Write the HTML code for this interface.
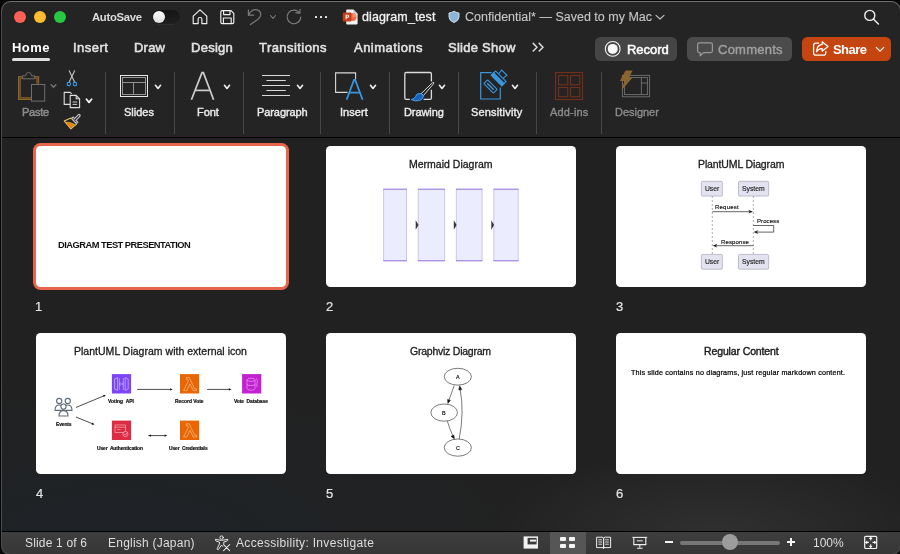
<!DOCTYPE html>
<html><head><meta charset="utf-8"><title>diagram_test</title>
<style>
*{box-sizing:border-box;margin:0;padding:0}
html,body{width:900px;height:554px;overflow:hidden;background:#000;font-family:"Liberation Sans",sans-serif;}
.abs{position:absolute}
.t{position:absolute;white-space:pre;will-change:transform}
#chrome{position:absolute;left:0;top:0;width:900px;height:137px;background:#242424}
#hline{position:absolute;left:0;top:137px;width:900px;height:1px;background:#000}
#sorter{position:absolute;left:0;top:138px;width:900px;height:393px;background:radial-gradient(ellipse 230px 90px at 715px 400px,rgba(255,255,255,0.07),rgba(255,255,255,0) 100%),radial-gradient(ellipse 420px 160px at 120px 400px,rgba(20,40,60,0.22),rgba(20,40,60,0) 100%),#212121}
#sline{position:absolute;left:0;top:531px;width:900px;height:1px;background:#000}
#status{position:absolute;left:0;top:532px;width:900px;height:22px;background:linear-gradient(#3e3e3e,#363636)}
.slide{position:absolute;width:250px;height:140.5px;background:#fff;border-radius:4.5px;overflow:hidden}
.sep{position:absolute;top:72px;width:1px;height:62px;background:#474747}
</style></head><body>
<div id="chrome"></div>
<div id="hline"></div>
<div id="sorter"></div>
<div id="sline"></div>
<div id="status"></div>
<!--TITLEBAR-->
<div class="abs" style="left:14px;top:11px;width:12px;height:12px;border-radius:50%;background:#fe5f57;"></div>
<div class="abs" style="left:34px;top:11px;width:12px;height:12px;border-radius:50%;background:#febc2e;"></div>
<div class="abs" style="left:54px;top:11px;width:12px;height:12px;border-radius:50%;background:#28c840;"></div>
<div class="t" style="left:92.20px;top:9px;font-size:11.3px;line-height:16px;color:#dcdcdc;letter-spacing:-0.301px;font-weight:bold;">AutoSave</div>
<div class="abs" style="left:152px;top:10px;width:28px;height:14px;border-radius:7px;background:linear-gradient(#151515,#1f1f1f);box-shadow:0 0.6px 0 #3a3a3a"></div>
<div class="abs" style="left:153px;top:11px;width:12px;height:12px;border-radius:50%;background:linear-gradient(#ffffff,#dedede);"></div>
<svg class="abs" style="left:190px;top:7px" width="20" height="20" viewBox="0 0 20 20" fill="none" stroke="#f0f0f0" stroke-width="1.15" stroke-linejoin="round" stroke-linecap="round">
<path d="M3.2 9.2 L10 2.8 L16.8 9.2 V16.6 H11.9 V12.2 Q11.9 10.5 10 10.5 Q8.1 10.5 8.1 12.2 V16.6 H3.2 Z"/>
</svg>
<svg class="abs" style="left:218px;top:7px" width="20" height="20" viewBox="0 0 20 20" fill="none" stroke="#f0f0f0" stroke-width="1.15" stroke-linejoin="round">
<path d="M2.8 5 Q2.8 3.6 4.2 3.6 H13 L15.8 6.4 V15.2 Q15.8 16.6 14.4 16.6 H4.2 Q2.8 16.6 2.8 15.2 Z"/>
<path d="M5.6 3.8 V7.6 H12 V3.8"/>
<path d="M5.4 16.4 V11 H13.2 V16.4"/>
</svg>
<svg class="abs" style="left:244px;top:5px" width="22" height="24" viewBox="0 0 22 24" fill="none" stroke="#7b7b7b" stroke-width="1.2" stroke-linecap="round" stroke-linejoin="round">
<path d="M4.4 5 V10.2 H9.6"/>
<path d="M4.6 10 Q7.5 4 13 4.8 Q17.4 6 16.6 10.4 Q16 12.8 13.6 14.6 L6.4 19.6"/>
</svg>
<svg class="abs" style="left:268px;top:12px" width="10" height="10" viewBox="0 0 10 10" fill="none" stroke="#7b7b7b" stroke-width="1.1" stroke-linecap="round" stroke-linejoin="round"><path d="M2.4 3.5 L5 6.4 L7.6 3.5"/></svg>
<svg class="abs" style="left:283px;top:5px" width="22" height="24" viewBox="0 0 22 24" fill="none" stroke="#7b7b7b" stroke-width="1.2" stroke-linecap="round" stroke-linejoin="round">
<path d="M16.6 8.2 A6.8 6.8 0 1 0 17.7 12.2"/>
<path d="M12.8 7.8 H17 V4.4"/>
</svg>
<div class="abs" style="left:315px;top:16px;width:2px;height:2px;background:#f0f0f0;box-shadow:5px 0 0 #f0f0f0,10px 0 0 #f0f0f0;border-radius:0.5px"></div>
<svg class="abs" style="left:342px;top:9px" width="17" height="16" viewBox="0 0 17 16">
<path d="M5 0.6 H11.4 L15.6 4.8 V14.6 Q15.6 15.4 14.8 15.4 H5 Q4.2 15.4 4.2 14.6 V1.4 Q4.2 0.6 5 0.6 Z" fill="#f3f3f3"/>
<path d="M11.4 0.6 L15.6 4.8 H12.2 Q11.4 4.8 11.4 4 Z" fill="#c9c9c9"/>
<circle cx="10.6" cy="8" r="3.9" fill="#ed6c47"/>
<path d="M10.6 4.1 A3.9 3.9 0 0 1 14.5 8 H10.6 Z" fill="#ff8f6b"/>
<rect x="0.8" y="3.6" width="8.6" height="8.8" rx="1" fill="#c43e1c"/>
<path d="M3.6 10.3 V5.7 H5.6 Q7.2 5.7 7.2 7.2 Q7.2 8.7 5.6 8.7 H4.6 V10.3 Z M4.6 6.6 V7.8 H5.5 Q6.2 7.8 6.2 7.2 Q6.2 6.6 5.5 6.6 Z" fill="#fff" fill-rule="evenodd"/>
</svg>
<div class="t" style="left:362.30px;top:8px;font-size:12.5px;line-height:18px;color:#f2f2f2;letter-spacing:0.103px;-webkit-text-stroke:0.3px #f2f2f2;">diagram_test</div>
<svg class="abs" style="left:447px;top:9px" width="14" height="16" viewBox="0 0 14 16">
<path d="M7 2.2 Q9.4 3.8 12 4 V8 Q11.8 11.8 7 13.6 Q2.2 11.8 2 8 V4 Q4.6 3.8 7 2.2 Z" fill="#8db4d8" stroke="#d9e8f5" stroke-width="0.9"/>
</svg>
<div class="t" style="left:465.00px;top:8px;font-size:12.5px;line-height:18px;color:#c8c8c8;letter-spacing:0.004px;-webkit-text-stroke:0.1px #c8c8c8;">Confidential* — Saved to my Mac</div>
<svg class="abs" style="left:654px;top:12px" width="12" height="10" viewBox="0 0 12 10" fill="none" stroke="#bdbdbd" stroke-width="1.2" stroke-linecap="round" stroke-linejoin="round"><path d="M2 3.4 L6 7 L10 3.4"/></svg>
<svg class="abs" style="left:862px;top:7px" width="20" height="20" viewBox="0 0 20 20" fill="none" stroke="#f0f0f0" stroke-width="1.4" stroke-linecap="round"><circle cx="7.8" cy="8.4" r="5"/><path d="M11.6 12.2 L16.4 17"/></svg>

<!--TABS-->
<div class="t" style="left:12.40px;top:38px;font-size:13px;line-height:19px;color:#ffffff;letter-spacing:0.419px;font-weight:bold;">Home</div>
<div class="abs" style="left:12px;top:58px;width:38px;height:3px;border-radius:1.5px;background:#dedede"></div>
<div class="t" style="left:73.40px;top:38px;font-size:13px;line-height:19px;color:#e2e2e2;letter-spacing:0.481px;-webkit-text-stroke:0.55px #e2e2e2;">Insert</div>
<div class="t" style="left:134.40px;top:38px;font-size:13px;line-height:19px;color:#e2e2e2;letter-spacing:0.214px;-webkit-text-stroke:0.55px #e2e2e2;">Draw</div>
<div class="t" style="left:190.50px;top:38px;font-size:13px;line-height:19px;color:#e2e2e2;letter-spacing:0.255px;-webkit-text-stroke:0.55px #e2e2e2;">Design</div>
<div class="t" style="left:258.50px;top:38px;font-size:13px;line-height:19px;color:#e2e2e2;letter-spacing:0.445px;-webkit-text-stroke:0.55px #e2e2e2;">Transitions</div>
<div class="t" style="left:353.50px;top:38px;font-size:13px;line-height:19px;color:#e2e2e2;letter-spacing:0.469px;-webkit-text-stroke:0.55px #e2e2e2;">Animations</div>
<div class="t" style="left:448.40px;top:38px;font-size:13px;line-height:19px;color:#e2e2e2;letter-spacing:0.255px;-webkit-text-stroke:0.55px #e2e2e2;">Slide Show</div>
<svg class="abs" style="left:530px;top:41px" width="16" height="12" viewBox="0 0 16 12" fill="none" stroke="#dcdcdc" stroke-width="1.5" stroke-linecap="round" stroke-linejoin="round"><path d="M3.2 2.4 L7 6.2 L3.2 10"/><path d="M9.2 2.4 L13 6.2 L9.2 10"/></svg>
<div class="abs" style="left:595px;top:37px;width:82px;height:23.5px;border-radius:5.5px;background:#454545"></div>
<svg class="abs" style="left:603px;top:39px" width="20" height="20" viewBox="0 0 20 20"><circle cx="9.7" cy="9.9" r="7.4" fill="none" stroke="#f4f4f4" stroke-width="1.1"/><circle cx="9.7" cy="9.9" r="5" fill="#f8f8f8"/></svg>
<div class="t" style="left:626.80px;top:40px;font-size:13px;line-height:19px;color:#ffffff;letter-spacing:-0.054px;-webkit-text-stroke:0.5px #ffffff;">Record</div>
<div class="abs" style="left:687.4px;top:37px;width:104.6px;height:23.5px;border-radius:5.5px;background:#4b4b4b"></div>
<svg class="abs" style="left:695px;top:40px" width="20" height="18" viewBox="0 0 20 18" fill="none" stroke="#9a9a9a" stroke-width="1.2" stroke-linejoin="round"><path d="M4.4 2.8 H15.6 Q17.4 2.8 17.4 4.6 V10.8 Q17.4 12.6 15.6 12.6 H8.6 L5.2 15.8 V12.6 H4.4 Q2.6 12.6 2.6 10.8 V4.6 Q2.6 2.8 4.4 2.8 Z"/></svg>
<div class="t" style="left:718.40px;top:40px;font-size:13px;line-height:19px;color:#9f9f9f;letter-spacing:0.243px;-webkit-text-stroke:0.45px #9f9f9f;">Comments</div>
<div class="abs" style="left:802px;top:37px;width:89px;height:23.5px;border-radius:5.5px;background:#c4450f"></div>
<svg class="abs" style="left:811px;top:39px" width="20" height="20" viewBox="0 0 20 20" fill="none" stroke="#ffffff" stroke-width="1.25" stroke-linejoin="round" stroke-linecap="round">
<path d="M7.6 4.2 H4.8 Q2.6 4.2 2.6 6.4 V14 Q2.6 16.2 4.8 16.2 H12.6 Q14.8 16.2 14.8 14 V12.6"/>
<path d="M11.2 2.8 L17 7.6 L11.2 12.2 V9.6 Q7.4 9.4 5.6 12.8 Q5.8 6 11.2 5.4 Z"/>
</svg>
<div class="t" style="left:833.40px;top:40px;font-size:13px;line-height:19px;color:#ffffff;letter-spacing:-0.548px;font-weight:bold;">Share</div>
<svg class="abs" style="left:874px;top:44px" width="12" height="10" viewBox="0 0 12 10" fill="none" stroke="#fff" stroke-width="1.2" stroke-linecap="round" stroke-linejoin="round"><path d="M2.2 3.4 L6 7.2 L9.8 3.4"/></svg>

<!--RIBBON-->
<div class="sep" style="left:105px"></div>
<div class="sep" style="left:174px"></div>
<div class="sep" style="left:243px"></div>
<div class="sep" style="left:320px"></div>
<div class="sep" style="left:389px"></div>
<div class="sep" style="left:458px"></div>
<div class="sep" style="left:536px"></div>
<div class="sep" style="left:601px"></div>
<svg class="abs" style="left:14px;top:68px" width="36" height="36" viewBox="0 0 36 36" fill="none">
<path d="M17.4 30.6 H5.4 V9.6 H23.8 V15.6" stroke="#94713c" stroke-width="2.7" stroke-linejoin="miter"/>
<path d="M17.4 30.4 H5.7 V9.9 H23.5 V15.6" stroke="#6e491b" stroke-width="1.7" stroke-linejoin="miter"/>
<path d="M8.6 10.8 V7.8 H11.6 Q11.8 4.4 14.6 4.4 Q17.4 4.4 17.6 7.8 H20.6 V10.8 Z" stroke="#6e6e6e" stroke-width="1" fill="#242424" stroke-linejoin="round"/>
<rect x="17.5" y="16.5" width="13.2" height="16.6" stroke="#6e6e6e" stroke-width="1" fill="#242424"/>
</svg>
<svg class="abs" style="left:48.6px;top:81.9px" width="10" height="8" viewBox="0 0 10 8" fill="none" stroke="#707070" stroke-width="1.6" stroke-linecap="round" stroke-linejoin="round"><path d="M2.2 2.8 L4.5 5.3 L6.8 2.8"/></svg>
<div class="t" style="left:21.70px;top:104px;font-size:11px;line-height:16px;color:#8c8c8c;letter-spacing:-0.248px;-webkit-text-stroke:0.5px #8c8c8c;">Paste</div>
<svg class="abs" style="left:62px;top:68px" width="20" height="20" viewBox="0 0 20 20" fill="none" stroke-linecap="round">
<path d="M7.2 2.8 L12.8 14.4" stroke="#c2c2c2" stroke-width="1.1"/>
<path d="M12.6 2.8 L7 14.4" stroke="#c2c2c2" stroke-width="1.1"/>
<rect x="5.2" y="14.4" width="3.2" height="3.2" rx="1" stroke="#3a96dd" stroke-width="1.1"/>
<rect x="11.4" y="14.4" width="3.2" height="3.2" rx="1" stroke="#3a96dd" stroke-width="1.1"/>
</svg>
<svg class="abs" style="left:62px;top:90px" width="20" height="20" viewBox="0 0 20 20" fill="none" stroke="#dedede" stroke-width="1.1" stroke-linejoin="round">
<path d="M8 14.4 H2.2 V2.4 H8.2 L9.6 3.8"/>
<path d="M8.2 5.4 H14.2 L17.6 8.8 V17.6 H8.2 Z" fill="#242424"/>
<path d="M14.2 5.4 V8.8 H17.6"/>
<path d="M10.6 12 H15.2 M10.6 14.4 H15.2" stroke-width="0.9"/>
</svg>
<svg class="abs" style="left:84.05px;top:96.95px" width="10" height="8" viewBox="0 0 10 8" fill="none" stroke="#f4f4f4" stroke-width="1.8" stroke-linecap="round" stroke-linejoin="round"><path d="M2.45 2.3 L5 5.4 L7.55 2.3"/></svg>
<svg class="abs" style="left:58px;top:108px" width="30" height="26" viewBox="0 0 30 26" fill="none" stroke-linejoin="round" stroke-linecap="round">
<path d="M12.9 10 L6.2 12.9 L12.9 20.8 L18.4 16.2" stroke="#f3c25c" stroke-width="1.1"/>
<path d="M8.4 14.2 Q12 14 16.6 16.4 L12.9 19.8 Z" fill="#e8870f" stroke="#eea32e" stroke-width="0.8"/>
<path d="M17.6 11.2 L21 7.6" stroke="#c6c6c6" stroke-width="3.4"/>
<path d="M13.9 9.3 L19.5 15.3" stroke="#c6c6c6" stroke-width="3.2" stroke-linecap="butt"/>
<path d="M14.6 10 L18.8 14.6" stroke="#242424" stroke-width="1" stroke-linecap="butt"/>
<path d="M17.4 11.4 L21 7.6" stroke="#242424" stroke-width="1.2"/>
</svg>
<svg class="abs" style="left:118px;top:72px" width="32" height="28" viewBox="0 0 32 28" fill="none">
<rect x="2.5" y="3.5" width="27" height="21" stroke="#e8e8e8" stroke-width="1"/>
<rect x="4.5" y="5.5" width="23" height="17" stroke="#929292" stroke-width="1"/>
<path d="M4.5 10.5 H27.5 M15.5 10.5 V22.5" stroke="#929292" stroke-width="1"/>
</svg>
<svg class="abs" style="left:153.05px;top:82.75px" width="10" height="8" viewBox="0 0 10 8" fill="none" stroke="#f2f2f2" stroke-width="1.6" stroke-linecap="round" stroke-linejoin="round"><path d="M2.45 2.3 L5 5.4 L7.55 2.3"/></svg>
<div class="t" style="left:124.30px;top:104px;font-size:11px;line-height:16px;color:#ececec;letter-spacing:0.005px;-webkit-text-stroke:0.4px #ececec;">Slides</div>
<svg class="abs" style="left:188px;top:70px" width="30" height="32" viewBox="0 0 30 32" fill="none" stroke="#cecece" stroke-width="1.7" stroke-linejoin="miter">
<path d="M3.4 29.8 L14 2.6 H15.4 L25.6 29.8"/>
<path d="M7.4 20.4 H21.8"/>
</svg>
<svg class="abs" style="left:221.85px;top:82.75px" width="10" height="8" viewBox="0 0 10 8" fill="none" stroke="#f2f2f2" stroke-width="1.6" stroke-linecap="round" stroke-linejoin="round"><path d="M2.45 2.3 L5 5.4 L7.55 2.3"/></svg>
<div class="t" style="left:197.40px;top:104px;font-size:11px;line-height:16px;color:#ececec;letter-spacing:-0.029px;-webkit-text-stroke:0.4px #ececec;">Font</div>
<svg class="abs" style="left:260px;top:72px" width="32" height="28" viewBox="0 0 32 28" fill="none" stroke="#dadada" stroke-width="1">
<path d="M2 3.5 H30 M6.4 8.5 H25.8 M2 13.5 H30 M6.4 18.5 H25.8 M2 23.5 H30"/>
</svg>
<svg class="abs" style="left:295.05px;top:83.05px" width="10" height="8" viewBox="0 0 10 8" fill="none" stroke="#f2f2f2" stroke-width="1.6" stroke-linecap="round" stroke-linejoin="round"><path d="M2.45 2.3 L5 5.4 L7.55 2.3"/></svg>
<div class="t" style="left:256.60px;top:104px;font-size:11px;line-height:16px;color:#ececec;letter-spacing:-0.086px;-webkit-text-stroke:0.4px #ececec;">Paragraph</div>
<svg class="abs" style="left:333px;top:70px" width="32" height="32" viewBox="0 0 32 32" fill="none">
<path d="M14.6 22.4 H2.6 V2.9 H22.6 V9.4" stroke="#d8d8d8" stroke-width="1.1"/>
<path d="M13.6 29.8 L21 10 H22.2 L29.6 29.8 M16.6 22.6 H26.8" stroke="#3a96dd" stroke-width="1.8"/>
</svg>
<svg class="abs" style="left:368.15px;top:82.75px" width="10" height="8" viewBox="0 0 10 8" fill="none" stroke="#f2f2f2" stroke-width="1.6" stroke-linecap="round" stroke-linejoin="round"><path d="M2.45 2.3 L5 5.4 L7.55 2.3"/></svg>
<div class="t" style="left:340.20px;top:104px;font-size:11px;line-height:16px;color:#ececec;letter-spacing:0.064px;-webkit-text-stroke:0.4px #ececec;">Insert</div>
<svg class="abs" style="left:402px;top:68px" width="36" height="36" viewBox="0 0 36 36" fill="none">
<path d="M7.8 31.3 H4.2 Q2.8 31.3 2.8 29.9 V5.9 Q2.8 4.5 4.2 4.5 H28 Q29.4 4.5 29.4 5.9 V13.4 M29.4 21.8 V29.9 Q29.4 31.3 28 31.3 H21.6" stroke="#dcdcdc" stroke-width="1.3"/>
<path d="M30.6 14.6 Q32.6 13.6 31.4 16 L21.4 27.6 L19.2 25.6 Z" stroke="#d4d4d4" stroke-width="1" fill="#242424" stroke-linejoin="round"/>
<path d="M19 25.4 L21.4 27.8 Q21.4 31.2 17.4 32.6 Q13 33.6 9.2 31.6 Q12.8 31 13.4 28.6 Q14.2 25 19 25.4 Z" fill="#1463bc" stroke="#4ea3ef" stroke-width="0.9"/>
</svg>
<svg class="abs" style="left:436.85px;top:82.75px" width="10" height="8" viewBox="0 0 10 8" fill="none" stroke="#f2f2f2" stroke-width="1.6" stroke-linecap="round" stroke-linejoin="round"><path d="M2.45 2.3 L5 5.4 L7.55 2.3"/></svg>
<div class="t" style="left:403.60px;top:104px;font-size:11px;line-height:16px;color:#ececec;letter-spacing:-0.094px;-webkit-text-stroke:0.4px #ececec;">Drawing</div>
<svg class="abs" style="left:478px;top:68px" width="32" height="34" viewBox="0 0 32 34" fill="none" stroke="#3a96dd" stroke-width="1.2" stroke-linejoin="miter">
<path d="M13.6 4.7 H2.7 V31 H22.3 V19.4"/>
<g transform="translate(20.7,10.3) rotate(45)">
<path d="M-3.1 -3 L-3.7 -8 H3.7 L3.1 -3" stroke-width="1.1"/>
<rect x="-7.4" y="-3" width="14.8" height="6" fill="#242424" stroke-width="1.1"/>
<rect x="-7.4" y="-0.2" width="14.8" height="3.2" fill="#3a96dd"/>
<rect x="-6.8" y="8.9" width="13.6" height="5.4" rx="0.8" fill="#242424" stroke-width="1.1"/>
<rect x="-4.6" y="10.9" width="9.2" height="1.5" fill="#3a96dd" stroke="none"/>
</g>
</svg>
<svg class="abs" style="left:509.95px;top:82.75px" width="10" height="8" viewBox="0 0 10 8" fill="none" stroke="#f2f2f2" stroke-width="1.6" stroke-linecap="round" stroke-linejoin="round"><path d="M2.45 2.3 L5 5.4 L7.55 2.3"/></svg>
<div class="t" style="left:471.20px;top:104px;font-size:11px;line-height:16px;color:#ececec;letter-spacing:0.170px;-webkit-text-stroke:0.4px #ececec;">Sensitivity</div>
<svg class="abs" style="left:553px;top:70px" width="32" height="32" viewBox="0 0 32 32" fill="none" stroke="#7c3118" stroke-width="1">
<rect x="2.6" y="2.6" width="27" height="27"/>
<rect x="5.6" y="5.6" width="9.2" height="9.2"/><rect x="17.6" y="5.6" width="9.2" height="9.2"/>
<rect x="5.6" y="17.6" width="9.2" height="9.2"/><rect x="17.6" y="17.6" width="9.2" height="9.2"/>
</svg>
<div class="t" style="left:549.50px;top:104px;font-size:11px;line-height:16px;color:#8c8c8c;letter-spacing:0.172px;-webkit-text-stroke:0.35px #8c8c8c;">Add-ins</div>
<svg class="abs" style="left:616px;top:68px" width="36" height="32" viewBox="0 0 36 32" fill="none">
<rect x="6.4" y="7.4" width="27.2" height="21.4" stroke="#727272" stroke-width="0.9"/>
<rect x="8.6" y="9.6" width="22.8" height="17" stroke="#727272" stroke-width="0.9"/>
<path d="M25.4 9.6 V26.6 M25.4 15 H31.4" stroke="#727272" stroke-width="0.9"/>
<path d="M9.6 2.4 H16.6 L13 9.8 H16.4 L5.6 22.2 L8.4 13 H3.8 Z" fill="#8c6430"/>
</svg>
<div class="t" style="left:614.60px;top:104px;font-size:11px;line-height:16px;color:#8c8c8c;letter-spacing:-0.029px;-webkit-text-stroke:0.35px #8c8c8c;">Designer</div>

<!--SLIDES-->
<div class="abs" style="left:33px;top:143px;width:256px;height:147px;border-radius:7.5px;background:#e8644b"></div>
<div class="slide" style="left:36px;top:146.2px"></div>
<div class="slide" style="left:326px;top:146.2px"></div>
<div class="slide" style="left:616px;top:146.2px"></div>
<div class="slide" style="left:36px;top:333.2px"></div>
<div class="slide" style="left:326px;top:333.2px"></div>
<div class="slide" style="left:616px;top:333.2px"></div>
<div class="t" style="left:35.20px;top:297px;font-size:13px;line-height:19px;color:#e4e4e4;letter-spacing:-0.800px;-webkit-text-stroke:0.2px #e4e4e4;">1</div>
<div class="t" style="left:326.20px;top:297px;font-size:13px;line-height:19px;color:#e4e4e4;letter-spacing:-0.800px;-webkit-text-stroke:0.2px #e4e4e4;">2</div>
<div class="t" style="left:616.20px;top:297px;font-size:13px;line-height:19px;color:#e4e4e4;letter-spacing:-0.800px;-webkit-text-stroke:0.2px #e4e4e4;">3</div>
<div class="t" style="left:36.00px;top:484px;font-size:13px;line-height:19px;color:#e4e4e4;letter-spacing:-0.800px;-webkit-text-stroke:0.2px #e4e4e4;">4</div>
<div class="t" style="left:326.20px;top:484px;font-size:13px;line-height:19px;color:#e4e4e4;letter-spacing:-0.800px;-webkit-text-stroke:0.2px #e4e4e4;">5</div>
<div class="t" style="left:616.20px;top:484px;font-size:13px;line-height:19px;color:#e4e4e4;letter-spacing:-0.800px;-webkit-text-stroke:0.2px #e4e4e4;">6</div>
<div class="t" style="left:58.30px;top:238px;font-size:9.3px;line-height:14px;color:#111;letter-spacing:-0.500px;font-weight:bold;">DIAGRAM TEST PRESENTATION</div>
<div class="t" style="left:408.90px;top:156px;font-size:10.5px;line-height:16px;color:#1a1a1a;letter-spacing:0.004px;-webkit-text-stroke:0.3px #1a1a1a;">Mermaid Diagram</div>
<div class="t" style="left:697.60px;top:156px;font-size:10.5px;line-height:16px;color:#1a1a1a;letter-spacing:-0.126px;-webkit-text-stroke:0.3px #1a1a1a;">PlantUML Diagram</div>
<div class="t" style="left:74.30px;top:343px;font-size:10.5px;line-height:16px;color:#1a1a1a;letter-spacing:0.018px;-webkit-text-stroke:0.3px #1a1a1a;">PlantUML Diagram with external icon</div>
<div class="t" style="left:410.30px;top:343px;font-size:10.5px;line-height:16px;color:#1a1a1a;letter-spacing:-0.239px;-webkit-text-stroke:0.3px #1a1a1a;">Graphviz Diagram</div>
<div class="t" style="left:703.60px;top:343px;font-size:10.5px;line-height:16px;color:#1a1a1a;letter-spacing:-0.125px;-webkit-text-stroke:0.4px #1a1a1a;">Regular Content</div>
<div class="t" style="left:631.20px;top:366px;font-size:7.2px;line-height:13px;color:#000;letter-spacing:0.179px;-webkit-text-stroke:0.22px #000;">This slide contains no diagrams, just regular markdown content.</div>
<svg class="abs" style="left:326px;top:146px" width="250" height="141" viewBox="326 146 250 141">
<rect x="383.3" y="188.8" width="23.5" height="72.4" fill="#ececff"/>
<path d="M383.6 189 V261 M406.5 189 V261" stroke="#c4b2ee" stroke-width="0.7"/>
<path d="M383.3 189.2 H406.8 M383.3 260.8 H406.8" stroke="#9370db" stroke-width="1"/>
<rect x="417.9" y="188.8" width="27.0" height="72.4" fill="#ececff"/>
<path d="M418.2 189 V261 M444.6 189 V261" stroke="#c4b2ee" stroke-width="0.7"/>
<path d="M417.9 189.2 H444.9 M417.9 260.8 H444.9" stroke="#9370db" stroke-width="1"/>
<rect x="456.0" y="188.8" width="26.4" height="72.4" fill="#ececff"/>
<path d="M456.3 189 V261 M482.1 189 V261" stroke="#c4b2ee" stroke-width="0.7"/>
<path d="M456.0 189.2 H482.4 M456.0 260.8 H482.4" stroke="#9370db" stroke-width="1"/>
<rect x="493.5" y="188.8" width="25.0" height="72.4" fill="#ececff"/>
<path d="M493.8 189 V261 M518.2 189 V261" stroke="#c4b2ee" stroke-width="0.7"/>
<path d="M493.5 189.2 H518.5 M493.5 260.8 H518.5" stroke="#9370db" stroke-width="1"/>
<path d="M415.7 220.2 L418.5 225 L415.7 229.8 Z" fill="#333"/>
<path d="M453.8 220.2 L456.6 225 L453.8 229.8 Z" fill="#333"/>
<path d="M491.3 220.2 L494.1 225 L491.3 229.8 Z" fill="#333"/>
</svg>
<svg class="abs" style="left:616px;top:146px" width="250" height="141" viewBox="616 146 250 141" fill="none">
<path d="M712.3 196 V255 M753.3 196 V255" stroke="#777" stroke-width="0.6" stroke-dasharray="2 2"/>
<rect x="701.3" y="181.3" width="21.1" height="14.8" rx="1.2" fill="#e2e2f0" stroke="#9a9aae" stroke-width="0.6"/>
<rect x="701.3" y="254.4" width="21.1" height="14.8" rx="1.2" fill="#e2e2f0" stroke="#9a9aae" stroke-width="0.6"/>
<rect x="738.5" y="181.3" width="30.1" height="14.8" rx="1.2" fill="#e2e2f0" stroke="#9a9aae" stroke-width="0.6"/>
<rect x="738.5" y="254.4" width="30.1" height="14.8" rx="1.2" fill="#e2e2f0" stroke="#9a9aae" stroke-width="0.6"/>
<path d="M712.3 211.7 H751" stroke="#222" stroke-width="0.7"/><path d="M753 211.7 L748.4 209.8 L749.6 211.7 L748.4 213.6 Z" fill="#222"/>
<path d="M753.3 225.5 H773.7 V232.1 H755.5" stroke="#222" stroke-width="0.7"/><path d="M753.6 232.1 L758.2 230.2 L757 232.1 L758.2 234 Z" fill="#222"/>
<path d="M753.3 245.7 H714.5" stroke="#222" stroke-width="0.7"/><path d="M712.6 245.7 L717.2 243.8 L716 245.7 L717.2 247.6 Z" fill="#222"/>
</svg>
<div class="t" style="left:704.80px;top:183px;font-size:6.8px;line-height:11px;color:#111;letter-spacing:-0.065px;-webkit-text-stroke:0.1px #111;">User</div>
<div class="t" style="left:741.60px;top:183px;font-size:6.8px;line-height:11px;color:#111;letter-spacing:0.005px;-webkit-text-stroke:0.1px #111;">System</div>
<div class="t" style="left:704.80px;top:256px;font-size:6.8px;line-height:11px;color:#111;letter-spacing:-0.065px;-webkit-text-stroke:0.1px #111;">User</div>
<div class="t" style="left:741.60px;top:256px;font-size:6.8px;line-height:11px;color:#111;letter-spacing:0.005px;-webkit-text-stroke:0.1px #111;">System</div>
<div class="t" style="left:715.40px;top:202px;font-size:6px;line-height:10px;color:#111;letter-spacing:0.220px;-webkit-text-stroke:0.15px #111;">Request</div>
<div class="t" style="left:756.90px;top:216px;font-size:6px;line-height:10px;color:#111;letter-spacing:0.088px;-webkit-text-stroke:0.15px #111;">Process</div>
<div class="t" style="left:720.60px;top:237px;font-size:6px;line-height:10px;color:#111;letter-spacing:0.134px;-webkit-text-stroke:0.15px #111;">Response</div>
<svg class="abs" style="left:36px;top:333px" width="250" height="141" viewBox="36 333 250 141" fill="none">
<rect x="111.9" y="374.1" width="19.2" height="19.4" fill="#7d45fa"/>
<rect x="180.0" y="374.1" width="19.2" height="19.4" fill="#e96604"/>
<rect x="242.1" y="374.1" width="19.2" height="19.4" fill="#c320cf"/>
<rect x="111.9" y="420.6" width="19.2" height="19.4" fill="#dc2b42"/>
<rect x="180.0" y="420.6" width="19.2" height="19.4" fill="#e96604"/>
<g stroke="#e9dcff" stroke-opacity="0.7" stroke-width="0.8" fill="none"><path d="M117.6 377.6 L114.6 379 V389 L117.6 390.4 Z M125.2 377.6 L128.2 379 V389 L125.2 390.4 Z"/><path d="M119.4 378 V390 M123.4 378 V390" stroke-width="0.7"/><path d="M119.6 384 H123.2 M120.4 382.6 L119.4 384 L120.4 385.4 M122.4 382.6 L123.4 384 L122.4 385.4" stroke-width="0.6"/></g>
<path d="M186.2 377.4 h3 l5.4 11.4 h2 v1.8 h-3.4 l-3.2 -6.8 l-3.2 6.8 h-3.2 l4.8 -9.6 l-0.8 -1.8 h-1.4 z" stroke="#ffd9b0" stroke-opacity="0.75" stroke-width="0.7" fill="none"/>
<path d="M186.2 423.8 h3 l5.4 11.4 h2 v1.8 h-3.4 l-3.2 -6.8 l-3.2 6.8 h-3.2 l4.8 -9.6 l-0.8 -1.8 h-1.4 z" stroke="#ffd9b0" stroke-opacity="0.75" stroke-width="0.7" fill="none"/>
<g stroke="#f6d0f8" stroke-opacity="0.7" stroke-width="0.7" fill="none"><ellipse cx="251" cy="379.8" rx="4" ry="1.6"/><path d="M247 379.8 V388.6 Q247 390.2 251 390.2 Q255 390.2 255 388.6 V379.8"/><path d="M247 384 Q247 385.6 251 385.6 Q255 385.6 255 384"/><path d="M256 378 Q258.4 380 257 383 Q256.2 385 257.4 387"/></g>
<g stroke="#ffd3da" stroke-opacity="0.75" stroke-width="0.7" fill="none"><rect x="115" y="425" width="10.6" height="7.6"/><path d="M115 427.2 H125.6 M117 429.6 H120.6"/><circle cx="125.4" cy="434" r="2.6" fill="#dd344c"/><path d="M124.2 434 L125.2 435 L126.8 433"/></g>
<g stroke="#5f6b7a" stroke-width="1.1" fill="#fff"><circle cx="59.2" cy="401" r="2.6"/><path d="M55 410.4 Q55 405 59.2 405 Q63.4 405 63.4 410.4 Z"/><circle cx="67.8" cy="401" r="2.6"/><path d="M63.6 410.4 Q63.6 405 67.8 405 Q72 405 72 410.4 Z"/><circle cx="63.5" cy="406.6" r="2.6"/><path d="M59 416 Q59 410.6 63.5 410.6 Q68 410.6 68 416 Z"/></g>
<path d="M75.90 407.50 L104.46 395.60" stroke="#111" stroke-width="0.75"/><path d="M105.90 395.00 L103.92 397.02 L103.08 394.98 Z" fill="#111"/>
<path d="M75.90 417.00 L93.06 424.01" stroke="#111" stroke-width="0.75"/><path d="M94.50 424.60 L91.68 424.63 L92.51 422.60 Z" fill="#111"/>
<path d="M137.10 389.40 L171.14 389.40" stroke="#111" stroke-width="0.75"/><path d="M172.70 389.40 L170.10 390.50 L170.10 388.30 Z" fill="#111"/>
<path d="M207.10 389.40 L229.94 389.40" stroke="#111" stroke-width="0.75"/><path d="M231.50 389.40 L228.90 390.50 L228.90 388.30 Z" fill="#111"/>
<path d="M148.40 435.60 L165.74 435.60" stroke="#111" stroke-width="0.75"/><path d="M167.30 435.60 L164.70 436.70 L164.70 434.50 Z" fill="#111"/><path d="M148.40 435.60 L151.00 436.70 L151.00 434.50 Z" fill="#111"/>
</svg>
<div class="t" style="left:108.00px;top:397px;font-size:4.9px;line-height:9px;color:#111;letter-spacing:0.041px;font-weight:bold;-webkit-text-stroke:0.2px #111;">Voting  API</div>
<div class="t" style="left:174.90px;top:397px;font-size:4.9px;line-height:9px;color:#111;letter-spacing:0.004px;font-weight:bold;-webkit-text-stroke:0.2px #111;">Record Vote</div>
<div class="t" style="left:233.90px;top:397px;font-size:4.9px;line-height:9px;color:#111;letter-spacing:-0.065px;font-weight:bold;-webkit-text-stroke:0.2px #111;">Vote  Database</div>
<div class="t" style="left:55.60px;top:420px;font-size:4.9px;line-height:9px;color:#111;letter-spacing:-0.108px;font-weight:bold;-webkit-text-stroke:0.2px #111;">Events</div>
<div class="t" style="left:97.00px;top:444px;font-size:4.9px;line-height:9px;color:#111;letter-spacing:-0.088px;font-weight:bold;-webkit-text-stroke:0.2px #111;">User  Authentication</div>
<div class="t" style="left:169.40px;top:444px;font-size:4.9px;line-height:9px;color:#111;letter-spacing:-0.102px;font-weight:bold;-webkit-text-stroke:0.2px #111;">User  Credentials</div>
<svg class="abs" style="left:326px;top:333px" width="250" height="141" viewBox="326 333 250 141" fill="none" stroke="#222" stroke-width="0.6">
<ellipse cx="457.8" cy="376.7" rx="13.6" ry="8.4"/><ellipse cx="444.2" cy="412.6" rx="13.3" ry="8.6"/><ellipse cx="457.8" cy="447.6" rx="13.6" ry="8.6"/>
<path d="M454.2 385.6 L449 400"/><path d="M447.9 403.4 L447.6 399.4 L450.4 400.4 Z" fill="#111"/>
<path d="M447.4 421.2 Q449.6 429 452.8 435.6"/><path d="M454.4 438.8 L451 436.4 L453.8 435 Z" fill="#111"/>
<path d="M459.2 439 Q464.4 412 460.2 389.6"/><path d="M459.6 385.8 L461.8 389.6 L458.8 390 Z" fill="#111"/>
</svg>
<div class="t" style="left:455.90px;top:372px;font-size:5.4px;line-height:10px;color:#000;letter-spacing:-0.106px;-webkit-text-stroke:0.15px #000;font-family:"Liberation Serif",serif;">A</div>
<div class="t" style="left:442.30px;top:408px;font-size:5.4px;line-height:10px;color:#000;letter-spacing:0.191px;-webkit-text-stroke:0.15px #000;font-family:"Liberation Serif",serif;">B</div>
<div class="t" style="left:455.90px;top:443px;font-size:5.4px;line-height:10px;color:#000;letter-spacing:0.191px;-webkit-text-stroke:0.15px #000;font-family:"Liberation Serif",serif;">C</div>

<!--STATUS-->
<div class="t" style="left:25.20px;top:534px;font-size:12px;line-height:18px;color:#dedede;letter-spacing:0.179px;">Slide 1 of 6</div>
<div class="t" style="left:108.20px;top:534px;font-size:12px;line-height:18px;color:#dedede;letter-spacing:0.227px;">English (Japan)</div>
<div class="t" style="left:236.00px;top:534px;font-size:12px;line-height:18px;color:#dedede;letter-spacing:0.313px;">Accessibility: Investigate</div>
<div class="t" style="left:812.60px;top:534px;font-size:12px;line-height:18px;color:#dedede;letter-spacing:-0.026px;">100%</div>
<svg class="abs" style="left:213px;top:534px" width="20" height="18" viewBox="0 0 20 18" fill="none" stroke="#e4e4e4" stroke-width="1" stroke-linejoin="round" stroke-linecap="round">
<circle cx="8.6" cy="3.6" r="1.7"/>
<path d="M2.4 5.6 Q2 6.6 3 7 L6.4 8 V10 L4.2 14.6 Q4 15.8 5.2 15.8 L8.6 11 L9.6 12.4 M14.8 5.6 Q15.2 6.6 14.2 7 L10.8 8 V9.8 M2.6 5.4 L8.6 6.4 L14.6 5.4"/>
<path d="M10.6 10.6 L16.6 16.6 M16.6 10.6 L10.6 16.6" stroke-width="1.1"/>
</svg>
<svg class="abs" style="left:522px;top:535px" width="18" height="15" viewBox="0 0 18 15">
<path d="M1.6 1.4 H16 V13.6 H1.6 Z" fill="#f2f2f2"/>
<rect x="5.6" y="2.9" width="9" height="6.5" fill="#3a3a3a"/>
<rect x="8" y="4.6" width="6" height="2" fill="#f2f2f2"/>
</svg>
<div class="abs" style="left:550px;top:532px;width:36px;height:22px;background:#565656"></div>
<div class="abs" style="left:559.6px;top:537.4px;width:6.2px;height:3.7px;border-radius:1px;background:#f4f4f4"></div>
<div class="abs" style="left:559.6px;top:544.0px;width:6.2px;height:3.7px;border-radius:1px;background:#f4f4f4"></div>
<div class="abs" style="left:568.8px;top:537.4px;width:6.2px;height:3.7px;border-radius:1px;background:#f4f4f4"></div>
<div class="abs" style="left:568.8px;top:544.0px;width:6.2px;height:3.7px;border-radius:1px;background:#f4f4f4"></div>
<svg class="abs" style="left:594px;top:535px" width="20" height="15" viewBox="0 0 20 15" fill="none" stroke="#eeeeee" stroke-width="1">
<path d="M2.6 2.2 H8 Q9.6 2.2 9.6 3.6 V12.6 H2.6 Z M16.6 2.2 H11.2 Q9.6 2.2 9.6 3.6 V12.6 H16.6 Z"/>
<path d="M4.4 4.8 H8 M4.4 7 H8 M4.4 9.2 H8 M11.2 4.8 H14.8 M11.2 7 H14.8 M11.2 9.2 H14.8" stroke-width="0.9"/>
<path d="M9.6 12.6 V14"/>
</svg>
<svg class="abs" style="left:630px;top:535px" width="20" height="16" viewBox="0 0 20 16" fill="none" stroke="#eeeeee" stroke-width="1.1">
<path d="M2.4 2.4 H17.2"/>
<path d="M3.8 2.6 V9.6 H15.8 V2.6"/>
<path d="M6.8 5.8 H12.8" stroke-width="1"/>
<path d="M9.8 9.6 V12.6 M7 13.2 H12.6"/>
</svg>
<div class="abs" style="left:665px;top:541px;width:8px;height:1.7px;background:#f4f4f4"></div>
<div class="abs" style="left:680px;top:540.6px;width:99.6px;height:4.2px;border-radius:2.1px;background:#767676"></div>
<div class="abs" style="left:721.6px;top:534px;width:16px;height:16px;border-radius:50%;background:#9c9c9c"></div>
<div class="abs" style="left:787px;top:541.1px;width:8px;height:1.8px;background:#f6f6f6"></div>
<div class="abs" style="left:790.1px;top:538px;width:1.8px;height:8px;background:#f6f6f6"></div>
<svg class="abs" style="left:862px;top:534px" width="18" height="17" viewBox="0 0 18 17" fill="none" stroke="#f4f4f4" stroke-width="1.2">
<rect x="2.7" y="2.3" width="12" height="12.2" rx="1"/>
<path d="M8.7 6.6 V3.4 M7.4 4.8 L8.7 3.4 L10 4.8 M8.7 10.2 V13.4 M7.4 12 L8.7 13.4 L10 12 M6.9 8.4 H3.7 M5.1 7.1 L3.7 8.4 L5.1 9.7 M10.5 8.4 H13.7 M12.3 7.1 L13.7 8.4 L12.3 9.7" stroke-width="1.1"/>
</svg>

<!--FRAME-->
<svg class="abs" style="left:0;top:0;z-index:99" width="900" height="554" viewBox="0 0 900 554">
<path fill="#050505" fill-rule="evenodd" d="M0 0H900V554H0Z M11 1 H891 Q901 1 901 11 V545 Q901 555 891 555 H11 Q1 555 1 545 V11 Q1 1 11 1Z"/>
<defs><linearGradient id="bg1" x1="0" y1="0" x2="0" y2="554" gradientUnits="userSpaceOnUse"><stop offset="0" stop-color="#727272"/><stop offset="0.03" stop-color="#4c4c4c"/><stop offset="1" stop-color="#4c4c4c"/></linearGradient></defs>
<rect x="1.5" y="1.5" width="899" height="553" rx="9.5" fill="none" stroke="url(#bg1)" stroke-width="1"/>
</svg>
</body></html>
